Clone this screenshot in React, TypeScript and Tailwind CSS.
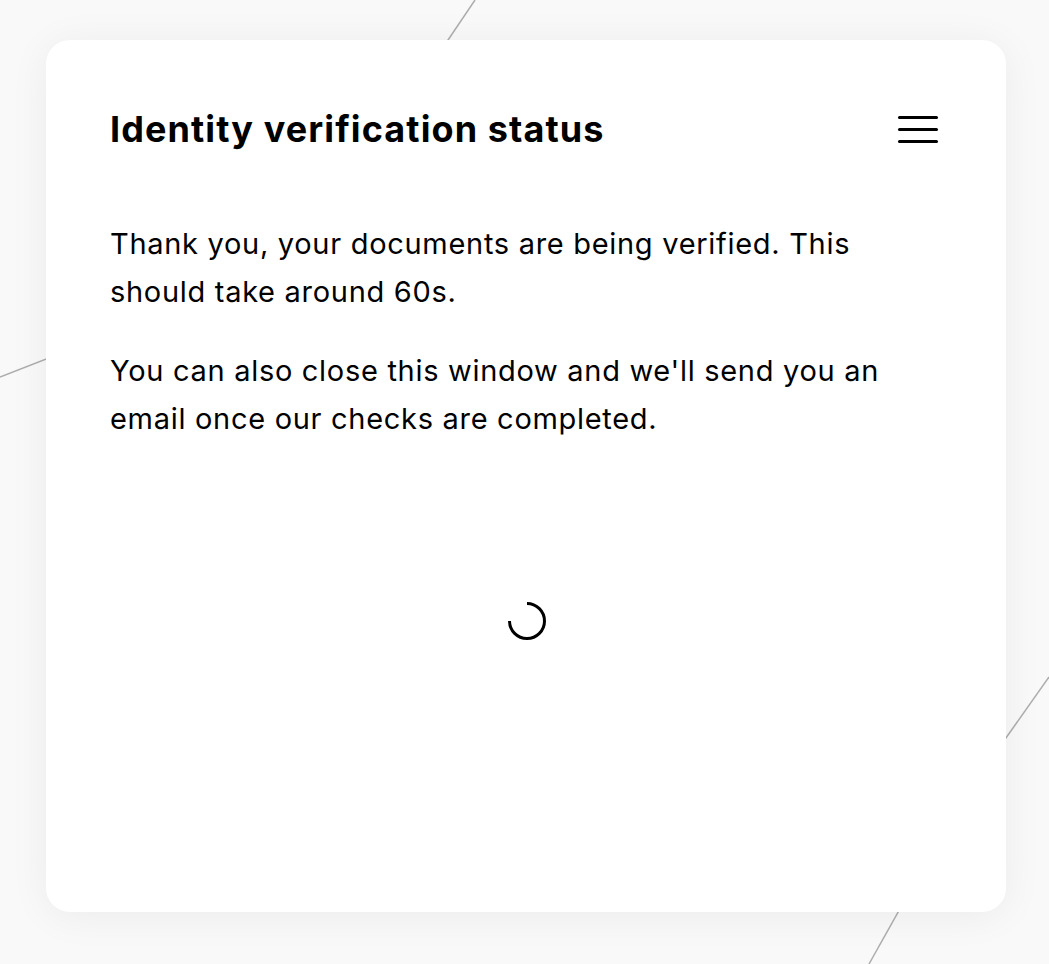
import React from "react";

export default function App() {
  return (
    <div
      className="relative min-h-screen w-full overflow-hidden bg-[#f9f9f9] pt-[40px] pb-[52px]"
      style={{ fontFamily: "Inter, 'Noto Sans', sans-serif" }}
    >
      <svg
        className="absolute inset-0 h-full w-full"
        width="1049"
        height="964"
        viewBox="0 0 1049 964"
        fill="none"
      >
        <line x1="475" y1="0" x2="340" y2="200" stroke="#adadad" strokeWidth="1.5" />
        <line x1="0" y1="377" x2="200" y2="299" stroke="#adadad" strokeWidth="1.5" />
        <line x1="1049" y1="677" x2="900" y2="888" stroke="#adadad" strokeWidth="1.5" />
        <line x1="869" y1="964" x2="989" y2="750" stroke="#adadad" strokeWidth="1.5" />
      </svg>

      <div className="relative z-10 mx-[46px] flex h-[872px] w-[960px] flex-col rounded-[24px] bg-white pl-[64px] pr-[68px] pt-[104px] pb-[64px] shadow-[0_4px_40px_rgba(0,0,0,0.06)]">
        <div className="-mt-[41px] flex items-center justify-between">
          <h1 className="text-[36px] leading-[52px] font-bold tracking-[1.1px] text-black">
            Identity verification status
          </h1>
          <button className="flex h-[40px] w-[40px] flex-col justify-center gap-[9px]" aria-label="Menu">
            <span className="block h-[3px] w-[40px] rounded-full bg-black" />
            <span className="block h-[3px] w-[40px] rounded-full bg-black" />
            <span className="block h-[3px] w-[40px] rounded-full bg-black" />
          </button>
        </div>

        <div className="mt-[65px] flex flex-col gap-[31px] text-[29px] leading-[48px] tracking-[0.7px] text-black">
          <p>
            Thank you, your documents are being verified. This
            <br />
            should take around 60s.
          </p>
          <p>
            You can also close this window and we'll send you an
            <br />
            email once our checks are completed.
          </p>
        </div>

        <div className="flex flex-1 items-start justify-center pt-[158px] pl-[6px]">
          <svg width="40" height="40" viewBox="0 0 40 40" fill="none">
            <path
              d="M20 2.5 A17.5 17.5 0 1 1 2.5 20"
              stroke="#000"
              strokeWidth="3"
              strokeLinecap="butt"
            />
          </svg>
        </div>
      </div>
    </div>
  );
}
